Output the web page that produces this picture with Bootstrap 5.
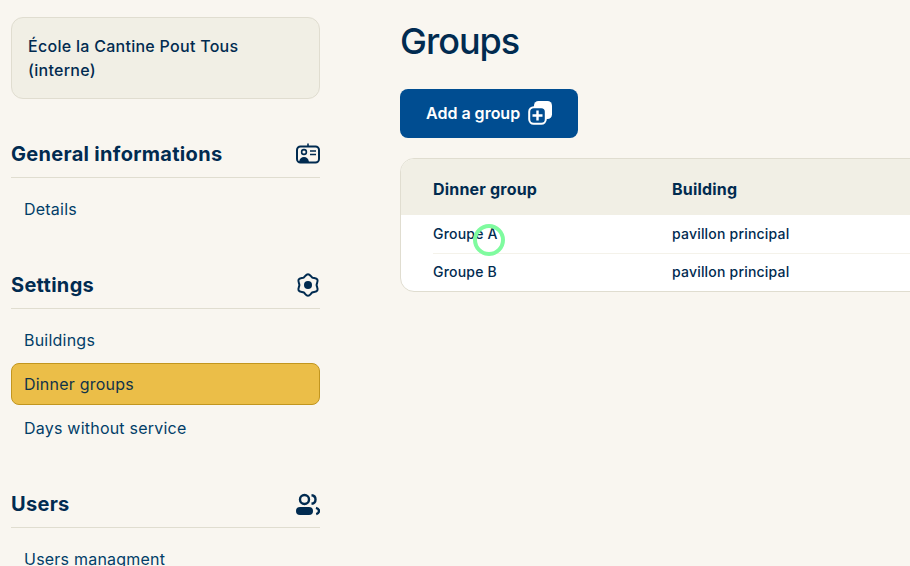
<!DOCTYPE html>
<html lang="en">
<head>
  <meta charset="UTF-8" />
  <title>Dinner groups</title>
  <link href="https://cdn.jsdelivr.net/npm/bootstrap@5.3.3/dist/css/bootstrap.min.css" rel="stylesheet">
  <style>
    html, body { height: 100%; overflow: hidden; }
    body { background: #f9f6f0; color: #012b50; font-family: Inter, "Noto Sans", sans-serif; font-size: 15px; }
    .page-wrap { width: 1200px; height: 566px; overflow: hidden; padding: 17px 0 0 11px; gap: 80px; }
    .side-col { width: 309px; flex: none; }
    .school-box { height: 82px; background: #f1efe5; border: 1px solid #e0ddd0; border-radius: 12px; padding: 16px 16px; font-size: 16px; font-weight: 500; line-height: 24px; letter-spacing: .28px; }
    .side-section { margin-top: 36px; }
    .side-head { height: 43px; padding-bottom: 4px; border-bottom: 1px solid #e0ddd0; }
    .side-head h2 { font-size: 20px; font-weight: 700; margin: 0; color: #012b50; letter-spacing: .3px; }
    .side-links { margin-top: 10px; }
    .side-links a { display: block; height: 42px; line-height: 40px; margin-bottom: 2px; padding-left: 12px; color: #023e68; font-size: 16px; letter-spacing: .22px; text-decoration: none; border: 1px solid transparent; border-radius: 8px; }
    .side-links a.is-active { background: #ebbe48; border-color: #c2961f; color: #10334a; }
    .main-col { width: 700px; flex: none; }
    .main-col h1 { font-size: 36px; font-weight: 500; line-height: 48px; letter-spacing: -1px; margin: 0 0 24px; color: #012b50; }
    .add-btn { display: inline-flex; align-items: center; gap: 8px; height: 49px; padding: 0 25px 2px 26px; background: #004d91; border: 0; border-radius: 8px; color: #fff; font-size: 16px; font-weight: 600; }
    .add-btn:hover { background: #004d91; color: #fff; }
    .group-table { margin-top: 20px; background: #fff; border: 1px solid #e0ddd0; border-radius: 14px; overflow: hidden; }
    .group-table .head-row { height: 56px; padding-top: 4px; background: #f1efe5; font-size: 16px; font-weight: 700; letter-spacing: .2px; }
    .group-table .body-row { height: 38px; margin-left: 32px; padding-bottom: 2px; font-size: 14px; font-weight: 500; letter-spacing: .2px; }
    .group-table .body-row + .body-row { border-top: 1px solid #f4f2ea; }
    .cell-a { width: 271px; padding-left: 32px; flex: none; }
    .body-row .cell-a { width: 239px; padding-left: 0; }
    .click-ring { position: absolute; left: 473px; top: 224px; width: 32px; height: 32px; border: 4px solid #7ffb9f; border-radius: 50%; }
  </style>
</head>
<body>
  <div class="d-flex page-wrap">
    <div class="side-col">
      <div class="school-box">École la Cantine Pout Tous<br>(interne)</div>

      <div class="side-section">
        <div class="side-head d-flex justify-content-between align-items-center">
          <h2>General informations</h2>
          <svg width="24" height="24" viewBox="0 0 24 24" fill="none" stroke="#012b50" stroke-width="2">
            <rect x="1" y="4.5" width="22" height="16" rx="3.5"/>
            <path d="M12 1.500v3" stroke-width="1.600"/>
            <circle cx="8" cy="10" r="2.400" stroke-width="1.600"/>
            <path d="M3 20c.5-3.500 2.500-5 5-5s4.500 1.500 5 5z" fill="#012b50" stroke="none"/>
            <path d="M14 9h6M14 12.500h6" stroke-width="1.600"/>
          </svg>
        </div>
        <div class="side-links">
          <a href="#">Details</a>
        </div>
      </div>

      <div class="side-section">
        <div class="side-head d-flex justify-content-between align-items-center">
          <h2>Settings</h2>
          <svg width="24" height="24" viewBox="0 0 24 24" fill="none" stroke="#012b50" stroke-width="2" stroke-linejoin="round">
            <path d="M12 1.200C14 1.200 15 3.800 16.300 4.550C17.600 5.300 20.400 4.900 21.350 6.600C22.300 8.300 20.600 10.500 20.600 12C20.600 13.500 22.300 15.700 21.350 17.400C20.400 19.100 17.600 18.700 16.300 19.450C15 20.200 14 22.800 12 22.800C10 22.800 9 20.200 7.700 19.450C6.400 18.700 3.600 19.100 2.650 17.400C1.700 15.700 3.400 13.500 3.400 12C3.400 10.500 1.700 8.300 2.650 6.600C3.600 4.900 6.400 5.300 7.700 4.550C9 3.800 10 1.200 12 1.200z"/>
            <circle cx="12" cy="12" r="4" fill="#012b50" stroke="none"/>
          </svg>
        </div>
        <div class="side-links">
          <a href="#">Buildings</a>
          <a href="#" class="is-active">Dinner groups</a>
          <a href="#">Days without service</a>
        </div>
      </div>

      <div class="side-section">
        <div class="side-head d-flex justify-content-between align-items-center">
          <h2>Users</h2>
          <svg width="24" height="24" viewBox="0 0 24 24" fill="none" stroke="#012b50" stroke-width="2.400">
            <circle cx="8.500" cy="7.500" r="4.500"/>
            <rect x="0" y="15" width="17" height="8" rx="4" fill="#012b50" stroke="none"/>
            <path d="M15.500 3.200c2.400.2 4 2 4 4.300s-1.600 4-4 4.300"/>
            <path d="M20 15.800c2 .6 3 1.800 3 3.200s-1 2.600-2.800 3.200"/>
          </svg>
        </div>
        <div class="side-links">
          <a href="#">Users managment</a>
        </div>
      </div>
    </div>

    <div class="main-col">
      <h1>Groups</h1>
      <button type="button" class="btn add-btn">
        Add a group
        <svg width="25" height="26" viewBox="0 0 25 26" fill="none">
          <rect x="6" y="1" width="18" height="18" rx="4.500" fill="#fff"/>
          <rect x="1.200" y="7.200" width="16.600" height="16.600" rx="4.500" fill="#004d91" stroke="#fff" stroke-width="2"/>
          <path d="M9.500 10.500v10M4.500 15.500h10" stroke="#fff" stroke-width="2.400"/>
        </svg>
      </button>
      <div class="group-table">
        <div class="head-row d-flex align-items-center">
          <div class="cell-a">Dinner group</div>
          <div>Building</div>
        </div>
        <div class="body-row d-flex align-items-center">
          <div class="cell-a">Groupe A</div>
          <div>pavillon principal</div>
        </div>
        <div class="body-row d-flex align-items-center">
          <div class="cell-a">Groupe B</div>
          <div>pavillon principal</div>
        </div>
      </div>
    </div>
  </div>
  <div class="click-ring"></div>
  <script src="https://cdn.jsdelivr.net/npm/bootstrap@5.3.3/dist/js/bootstrap.bundle.min.js"></script>
</body>
</html>
